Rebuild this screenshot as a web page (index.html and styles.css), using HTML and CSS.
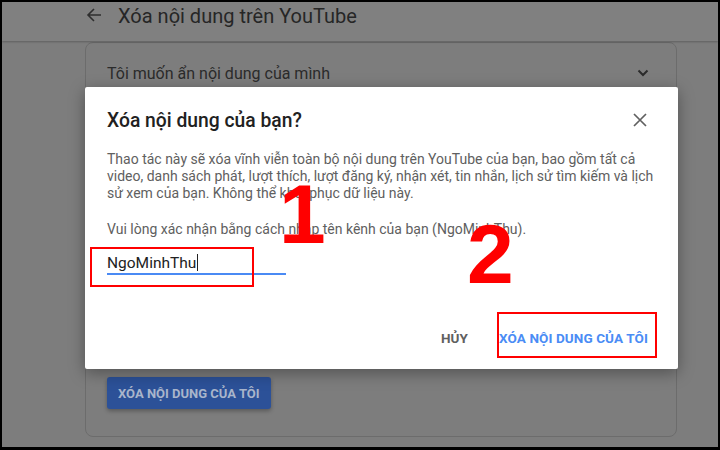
FILE: index.html
```html
<!DOCTYPE html>
<html lang="vi">

<head>
    <meta charset="UTF-8">
    <meta name="viewport" content="width=device-width, initial-scale=1.0">
    <title>Xóa nội dung trên YouTube</title>
    <link rel="stylesheet" href="styles.css">
</head>

<body>
    <div class="frame">
        <!-- Page behind the dialog, shown dimmed -->
        <div class="page">
            <header class="top-bar">
                <svg class="back-icon" width="16" height="16" viewBox="0 0 16 16">
                    <path d="M15 8H2M8 2L2 8l6 6" fill="none" stroke="currentColor" stroke-width="1.6"/>
                </svg>
                <h1 class="page-title">Xóa nội dung trên YouTube</h1>
            </header>

            <main class="content">
                <section class="card">
                    <div class="card-row">
                        <span>Tôi muốn ẩn nội dung của mình</span>
                        <svg class="chevron" width="12" height="8" viewBox="0 0 12 8">
                            <path d="M1.5 1.5L6 6l4.5-4.5" fill="none" stroke="currentColor" stroke-width="2"/>
                        </svg>
                    </div>
                    <button class="page-btn">XÓA NỘI DUNG CỦA TÔI</button>
                </section>
            </main>
        </div>

        <!-- Confirm dialog -->
        <div class="dialog">
            <div class="dialog-head">
                <h2 class="dialog-title">Xóa nội dung của bạn?</h2>
                <svg class="close-icon" width="14" height="14" viewBox="0 0 14 14">
                    <path d="M1 1l12 12M13 1L1 13" fill="none" stroke="currentColor" stroke-width="1.7"/>
                </svg>
            </div>
            <p class="dialog-text">Thao tác này sẽ xóa vĩnh viễn toàn bộ nội dung trên YouTube của bạn, bao gồm tất cả<br>
                video, danh sách phát, lượt thích, lượt đăng ký, nhận xét, tin nhắn, lịch sử tìm kiếm và lịch<br>
                sử xem của bạn. Không thể khôi phục dữ liệu này.</p>
            <p class="dialog-text confirm-text">Vui lòng xác nhận bằng cách nhập tên kênh của bạn (NgoMinhThu).</p>
            <div class="channel-input">NgoMinhThu<span class="caret"></span></div>
            <div class="dialog-actions">
                <button class="text-btn cancel">HỦY</button>
                <button class="text-btn confirm">XÓA NỘI DUNG CỦA TÔI</button>
            </div>
        </div>

        <!-- Step markers -->
        <div class="mark mark-input"></div>
        <div class="mark mark-confirm"></div>
        <span class="step step-1">1</span>
        <span class="step step-2">2</span>
    </div>
</body>

</html>
```

FILE: styles.css
```css
body {
    margin: 0;
    padding: 0;
    background-color: #000;
    font-family: Roboto, "Liberation Sans", Arial, sans-serif;
}

.frame {
    position: relative;
    width: 720px;
    height: 450px;
    box-sizing: border-box;
    border: 2px solid #000;
    border-bottom-width: 3px;
    overflow: hidden;
}

.page {
    display: flex;
    flex-direction: column;
    height: 100%;
    background-color: #7d7d7d;
}

.top-bar {
    display: flex;
    align-items: center;
    height: 39px;
    padding-left: 84px;
    background-color: #808080;
    box-shadow: 0 1px 2px rgba(0, 0, 0, 0.25);
    color: #262626;
    position: relative;
    z-index: 1;
}

.back-icon {
    color: #2e2e2e;
    margin-right: 16px;
    margin-top: -13px;
}

.page-title {
    margin: 0;
    margin-top: -12px;
    font-size: 20px;
    font-weight: 400;
}

.content {
    flex: 1;
    padding: 1px 0 8px 83px;
}

.card {
    display: flex;
    flex-direction: column;
    align-items: flex-start;
    width: 592px;
    height: 395px;
    box-sizing: border-box;
    padding: 0 22px 0 21px;
    border: 1px solid #6c6c6c;
    border-radius: 8px;
}

.card-row {
    display: flex;
    justify-content: space-between;
    align-items: center;
    align-self: stretch;
    height: 40px;
    margin-top: 10px;
    font-size: 16px;
    color: #2b2b2b;
}

.chevron {
    color: #2b2b2b;
    margin-right: 5px;
}

.page-btn {
    margin-top: auto;
    margin-bottom: 27px;
    height: 32px;
    padding: 0 11px;
    border: none;
    border-radius: 3px;
    background-color: #2c5198;
    color: #a9b5cb;
    font-family: inherit;
    font-size: 13px;
    font-weight: 700;
    box-shadow: 0 2px 4px rgba(0, 0, 0, 0.3);
}

.dialog {
    position: absolute;
    left: 83px;
    top: 85px;
    width: 593px;
    height: 282px;
    box-sizing: border-box;
    padding: 20px 22px 13px;
    display: flex;
    flex-direction: column;
    background-color: #fff;
    border-radius: 2px;
    box-shadow: 0 4px 16px rgba(0, 0, 0, 0.35);
}

.dialog-head {
    display: flex;
    justify-content: space-between;
    align-items: center;
    height: 26px;
}

.dialog-title {
    margin: 0;
    font-size: 19.3px;
    font-weight: 500;
    color: #212121;
}

.close-icon {
    color: #606060;
    margin-right: 9px;
}

.dialog-text {
    margin: 18px 0 0;
    font-size: 14px;
    line-height: 17px;
    color: #606060;
    white-space: nowrap;
}

.confirm-text {
    margin-top: 19px;
}

.channel-input {
    width: 179px;
    margin-top: 15px;
    height: 20px;
    font-size: 15.5px;
    line-height: 20px;
    color: #222;
    border-bottom: 2px solid #4a8af4;
}

.caret {
    display: inline-block;
    width: 1px;
    height: 17px;
    margin-left: 1px;
    vertical-align: -3px;
    background-color: #222;
}

.dialog-actions {
    margin-top: auto;
    display: flex;
    justify-content: flex-end;
    gap: 15px;
}

.text-btn {
    height: 36px;
    padding: 0 8px;
    border: none;
    background: none;
    font-family: inherit;
    font-size: 13.5px;
    font-weight: 700;
    letter-spacing: 0.1px;
}

.cancel {
    color: #606060;
}

.confirm {
    color: #4a8cf5;
}

/* red step annotations */
.mark {
    position: absolute;
    border: 2px solid #f00;
    box-sizing: border-box;
}

.mark-input {
    left: 88px;
    top: 245px;
    width: 164px;
    height: 40px;
}

.mark-confirm {
    left: 495px;
    top: 310px;
    width: 160px;
    height: 46px;
}

.step {
    position: absolute;
    font-family: "Liberation Sans", Arial, sans-serif;
    font-size: 84px;
    font-weight: 700;
    line-height: 1;
    color: #f00;
}

.step-1 {
    left: 277px;
    top: 170px;
}

.step-2 {
    left: 465px;
    top: 210px;
}
```
